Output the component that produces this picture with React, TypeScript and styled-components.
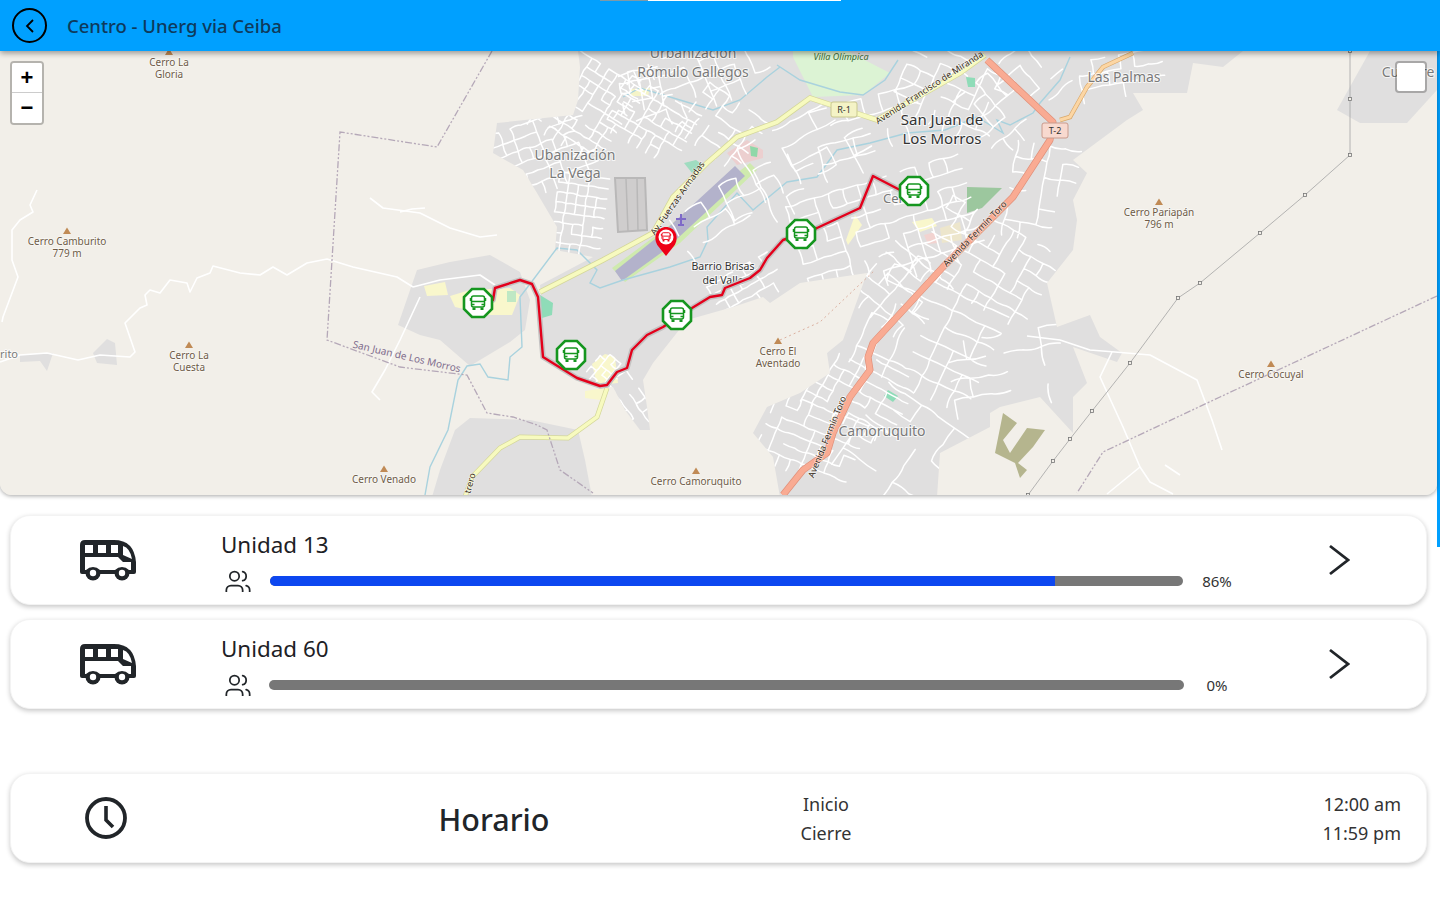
import React from 'react';
import styled, { createGlobalStyle } from 'styled-components';
import { Users } from 'lucide-react';

const GlobalStyle = createGlobalStyle`
    html, body {
        margin: 0;
        padding: 0;
        background: #ffffff;
        font-family: "Noto Sans", "Open Sans", sans-serif;
        color: #212529;
        overflow: hidden;
    }
`;

const Page = styled.div`
    position: relative;
    width: 1440px;
    height: 900px;
    overflow: hidden;
`;

const TopStrip = styled.div`
    position: absolute;
    top: 0;
    left: 600px;
    z-index: 5;
    display: flex;
    height: 1px;
`;

const StripPart = styled.span<{ $w: number; $color: string }>`
    width: ${p => p.$w}px;
    background: ${p => p.$color};
`;

const ScrollMark = styled.div`
    position: absolute;
    top: 0;
    right: 0;
    width: 3px;
    height: 547px;
    background: #00a0ff;
`;

const Header = styled.header`
    position: relative;
    z-index: 3;
    display: flex;
    align-items: center;
    gap: 20px;
    height: 51px;
    padding-left: 12px;
    background: #00a0ff;
    box-shadow: 0 2px 6px rgba(0, 0, 0, 0.4);
`;

const BackButton = styled.button`
    display: flex;
    align-items: center;
    justify-content: center;
    width: 35px;
    height: 35px;
    padding: 0;
    border: 2px solid #000000;
    border-radius: 50%;
    background: transparent;
`;

const HeaderTitle = styled.h1`
    margin: 0;
    font-size: 18.5px;
    font-weight: 500;
    color: #0e3a5c;
`;

const Content = styled.main`
    display: flex;
    flex-direction: column;
    width: 1437px;
`;

const MapBox = styled.section`
    position: relative;
    height: 444px;
    overflow: hidden;
    background: #f2efe9;
    border-radius: 0 0 12px 12px;
    box-shadow: 0 1px 4px rgba(0, 0, 0, 0.35);
`;

const MapDrawing = styled.svg`
    display: block;
    width: 1437px;
    height: 444px;
`;

const ZoomControl = styled.div`
    position: absolute;
    top: 10px;
    left: 10px;
    display: flex;
    flex-direction: column;
    width: 30px;
    border: 2px solid rgba(0, 0, 0, 0.25);
    border-radius: 4px;
    background-clip: padding-box;
`;

const ZoomButton = styled.button<{ $first?: boolean }>`
    width: 30px;
    height: 30px;
    padding: 0;
    border: none;
    border-bottom: ${p => (p.$first ? '1px solid #cccccc' : 'none')};
    border-radius: ${p => (p.$first ? '2px 2px 0 0' : '0 0 2px 2px')};
    background: #ffffff;
    font-family: "Liberation Sans", sans-serif;
    font-size: 22px;
    font-weight: 700;
    line-height: 28px;
    color: #000000;
`;

const LayerToggle = styled.div`
    position: absolute;
    top: 10px;
    right: 10px;
    width: 28px;
    height: 28px;
    border: 2px solid rgba(0, 0, 0, 0.25);
    border-radius: 4px;
    background: #ffffff;
    background-clip: padding-box;
`;

const Card = styled.article<{ $top: number }>`
    display: flex;
    align-items: stretch;
    height: 90px;
    margin: ${p => p.$top}px 10px 0;
    box-sizing: border-box;
    border: 1px solid #f3f3f3;
    border-radius: 20px;
    background: #ffffff;
    box-shadow: 0 2px 5px rgba(0, 0, 0, 0.22);
`;

const IconCell = styled.div<{ $nudge: number }>`
    display: flex;
    align-items: center;
    justify-content: center;
    flex: none;
    box-sizing: border-box;
    width: 195px;
    padding-right: ${p => p.$nudge}px;
`;

const UnitInfo = styled.div`
    display: flex;
    flex: 1;
    flex-direction: column;
    min-width: 0;
    padding: 14px 0 0 15px;
`;

const UnitName = styled.div`
    font-size: 22.4px;
    line-height: 30px;
    color: #1d2125;
`;

const LoadRow = styled.div`
    display: flex;
    align-items: center;
    height: 26px;
    margin-top: 8px;
`;

const PeopleIcon = styled.div`
    display: flex;
    flex: none;
    justify-content: center;
    width: 34px;
    height: 24px;
    margin-top: -2px;
    overflow: hidden;
    color: #212529;
`;

const Track = styled.div<{ $inset: number }>`
    flex: 1;
    height: 10px;
    margin: 0 ${p => 1 + p.$inset}px 0 ${p => 15 + p.$inset}px;
    overflow: hidden;
    border-radius: 5px;
    background: #777777;
`;

const TrackFill = styled.div`
    height: 100%;
    background: #0d47f0;
`;

const Percent = styled.span`
    flex: none;
    width: 66px;
    margin-top: -1px;
    font-size: 15px;
    color: #333333;
    text-align: center;
`;

const ArrowCell = styled.div`
    display: flex;
    flex: none;
    align-items: center;
    justify-content: center;
    box-sizing: border-box;
    width: 176px;
    padding-left: 1px;
`;

const ScheduleTitle = styled.h2`
    flex: none;
    width: 576px;
    margin: 0;
    font-size: 30.5px;
    font-weight: 500;
    line-height: 90px;
    text-align: center;
    color: #212529;
`;

const ScheduleColumn = styled.div<{ $align: string; $width: number }>`
    display: flex;
    flex: none;
    flex-direction: column;
    justify-content: center;
    gap: 4px;
    width: ${p => p.$width}px;
    padding-top: 1px;
    font-size: 18px;
    line-height: 25px;
    text-align: ${p => p.$align};
    color: #333333;
`;

const Spread = styled.div`
    flex: 1;
`;

const IconSpacer = styled.div`
    flex: none;
    width: 25px;
`;

const PeakName = styled.text`
    font-family: "Noto Sans", sans-serif;
    font-size: 10px;
    fill: #6e5b47;
    text-anchor: middle;
    paint-order: stroke;
    stroke: rgba(255, 255, 255, 0.6);
    stroke-width: 1.5px;
`;

const PlaceName = styled.text<{ $dark?: boolean; $size: number; $start?: boolean }>`
    font-family: "Noto Sans", sans-serif;
    font-size: ${p => p.$size}px;
    fill: ${p => (p.$dark ? '#333333' : '#7a7a7a')};
    text-anchor: ${p => (p.$start ? 'start' : 'middle')};
    paint-order: stroke;
    stroke: rgba(255, 255, 255, 0.7);
    stroke-width: 2px;
`;

const RoadName = styled.text`
    font-family: "Noto Sans", sans-serif;
    font-size: 9px;
    fill: #3a2e22;
    text-anchor: middle;
    paint-order: stroke;
    stroke: rgba(255, 255, 255, 0.5);
    stroke-width: 1.5px;
`;

const BorderName = styled.text`
    font-family: "Noto Sans", sans-serif;
    font-size: 10px;
    fill: #7e6b8c;
    text-anchor: middle;
`;

const ParkName = styled.text`
    font-family: "Noto Sans", sans-serif;
    font-size: 9px;
    font-style: italic;
    fill: #3b6b35;
    text-anchor: middle;
`;

const ShieldText = styled.text`
    font-family: "Noto Sans", sans-serif;
    font-size: 9px;
    fill: #333333;
    text-anchor: middle;
`;

const URBAN = [
    'M578,51 L580,67 L578,100 L573,115 L497,123 L493,153 L523,170 L537,193 L557,227 L555,250 L593,257 L540,285 L545,360 L600,387 L613,387 L625,410 L640,430 L650,430 L647,407 L643,380 L653,363 L687,320 L733,307 L763,297 L770,303 L800,283 L867,273 L843,340 L827,353 L830,373 L800,393 L767,407 L753,433 L773,457 L780,497 L937,497 L940,453 L990,427 L990,413 L1000,407 L1040,397 L1073,433 L1073,397 L1087,383 L1073,347 L1117,362 L1122,353 L1100,337 L1090,315 L1057,327 L1047,283 L1073,250 L1077,220 L1073,200 L1087,173 L1073,160 L1127,120 L1143,110 L1133,93 L1187,93 L1193,63 L1223,67 L1243,51 Z',
    'M398,325 L417,270 L450,262 L490,255 L520,272 L530,300 L525,330 L510,342 L470,366 L440,340 L420,335 Z',
    'M455,430 L470,418 L530,420 L578,430 L585,460 L592,497 L432,497 L440,470 Z',
    'M1370,51 L1337,110 L1360,123 L1407,123 L1437,90 L1437,51 Z',
    'M93,353 L107,339 L115,343 L117,365 L97,363 Z',
    'M20,355 L53,353 L47,371 L40,361 L20,362 Z',
];

const PATCHES = [
    { x: 575, y: 95, w: 90, h: 80, a: 32, c: 10, p: 0.8 },
    { x: 540, y: 150, w: 90, h: 60, a: -20, c: 12, p: 0.74 },
    { x: 578, y: 210, w: 46, h: 70, a: 8, c: 10, p: 0.9 },
    { x: 690, y: 80, w: 130, h: 60, a: -22, c: 16, p: 0.58 },
    { x: 650, y: 115, w: 70, h: 50, a: 30, c: 10, p: 0.75 },
    { x: 720, y: 120, w: 60, h: 50, a: 35, c: 12, p: 0.62 },
    { x: 800, y: 150, w: 110, h: 60, a: -28, c: 20, p: 0.62 },
    { x: 710, y: 220, w: 70, h: 40, a: -30, c: 18, p: 0.52 },
    { x: 770, y: 190, w: 90, h: 50, a: -25, c: 19, p: 0.54 },
    { x: 860, y: 130, w: 90, h: 60, a: -15, c: 18, p: 0.6 },
    { x: 880, y: 225, w: 170, h: 90, a: -17, c: 15, p: 0.85 },
    { x: 950, y: 90, w: 100, h: 70, a: 25, c: 15, p: 0.68 },
    { x: 1010, y: 100, w: 90, h: 70, a: -40, c: 15, p: 0.62 },
    { x: 1120, y: 75, w: 80, h: 40, a: -10, c: 14, p: 0.6 },
    { x: 1040, y: 190, w: 60, h: 90, a: 10, c: 16, p: 0.6 },
    { x: 985, y: 260, w: 120, h: 80, a: 30, c: 14, p: 0.74 },
    { x: 930, y: 330, w: 120, h: 90, a: 25, c: 18, p: 0.68 },
    { x: 900, y: 290, w: 70, h: 70, a: 40, c: 15, p: 0.72 },
    { x: 1000, y: 370, w: 100, h: 70, a: -10, c: 19, p: 0.54 },
    { x: 860, y: 385, w: 90, h: 60, a: 28, c: 12, p: 0.8 },
    { x: 810, y: 435, w: 90, h: 60, a: 22, c: 12, p: 0.75 },
    { x: 900, y: 445, w: 90, h: 90, a: 35, c: 20, p: 0.62 },
    { x: 620, y: 405, w: 50, h: 50, a: 55, c: 11, p: 0.6 },
    { x: 740, y: 285, w: 60, h: 30, a: -30, c: 10, p: 0.7 },
    { x: 640, y: 85, w: 40, h: 30, a: -10, c: 10, p: 0.65 },
    { x: 605, y: 370, w: 26, h: 30, a: 40, c: 7, p: 0.6 },
];

// small seeded generator so the street pattern stays the same on every load
const makeRandom = (seed: number) => () => {
    seed = (seed * 16807) % 2147483647;
    return seed / 2147483647;
};

const buildStreets = () => {
    const random = makeRandom(48271);
    let d = '';
    PATCHES.forEach(({ x, y, w, h, a, c, p }) => {
        const rad = (a * Math.PI) / 180;
        const place = (u: number, v: number) => {
            const px = x + u * Math.cos(rad) - v * Math.sin(rad);
            const py = y + u * Math.sin(rad) + v * Math.cos(rad);
            return `${px.toFixed(1)},${py.toFixed(1)}`;
        };
        const bend = () => (random() - 0.5) * c * 0.35;
        for (let v = -h / 2; v <= h / 2; v += c) {
            for (let u = -w / 2; u <= w / 2; u += c) {
                if (random() < p) d += `M${place(u, v)}Q${place(u + c / 2, v + bend())} ${place(u + c, v)}`;
                if (random() < p * 0.75) d += `M${place(u, v)}Q${place(u + bend(), v + c / 2)} ${place(u, v + c)}`;
            }
        }
    });
    return d;
};

const STREETS = buildStreets();

const TRACKS = [
    'M37,190 L30,205 L33,212 L20,220 L12,230 L12,260 L18,277 L3,317 L2,322',
    'M0,362 L20,355 L47,353 L78,360 L100,355 L130,357 L135,352 L125,323 L140,308 L147,305 L145,295 L150,290 L160,293 L170,280 L187,283 L190,292 L197,278 L210,273 L213,266 L240,273 L260,275 L273,267 L287,275 L307,263 L327,259 L353,267 L397,277 L413,287',
    'M370,198 L383,208 L420,213 L450,228 L480,237 L497,235',
    'M400,212 L412,209 L425,208',
    'M420,297 L400,340 L385,370 L372,392 L380,400',
    'M413,287 L440,280 L480,275 L495,285',
    'M1027,336 L1060,340 L1090,350 L1115,352 L1150,355 L1197,380 L1212,420 L1222,450',
    'M1112,352 L1100,377 L1123,427 L1140,467 L1107,494',
    'M1140,467 L1150,482 L1173,494',
    'M1165,465 L1180,475',
];

const RIVERS = [
    'M425,495 L430,467 L448,430 L458,380 L467,366 L480,364 L488,377 L508,380 L510,357 L522,347 L520,297 L533,280 L557,248 L577,250 L597,270 L590,283 L600,288 L623,280 L670,267 L700,257 L708,240 L707,227 L737,193 L753,210 L787,182 L817,177 L837,150 L870,143 L907,133',
    'M623,97 L640,88 L680,100 L713,110 L740,100 L767,77 L780,67',
    'M777,65 L800,80 L840,92 L863,95 L885,80 L898,60',
    'M1070,57 L1060,80 L1040,103 L1033,113 L1010,125 L997,120 L1003,133 L977,117 L945,130 L907,133',
];

const BORDERS = [
    'M492,51 L437,147 L340,132 L327,340 L400,367 L467,375 L487,413 L513,417 L537,425 L547,430 L560,470 L593,493',
    'M1437,296 L1220,397 L1103,452 L1077,493',
];

const POWER = [
    [1350, 51], [1350, 99], [1350, 155], [1305, 195], [1260, 233], [1200, 283], [1178, 298],
    [1130, 363], [1092, 411], [1070, 439], [1053, 461], [1028, 495],
];

const ROUTE =
    'M478,303 L493,300 L495,288 L520,280 L532,284 L538,297 L543,357 L577,378 L600,386 L607,385 L617,372 L627,368 L632,350 L647,335 L663,327 L692,308 L710,297 L722,295 L725,288 L750,278 L760,270 L767,258 L783,240 L817,228 L860,208 L873,176 L900,190';

const STOPS = [
    [478, 303],
    [571, 355],
    [677, 315],
    [801, 234],
    [914, 191],
];

const PEAKS: { x: number; y: number; lines: string[] }[] = [
    { x: 169, y: 52, lines: ['Cerro La', 'Gloria'] },
    { x: 67, y: 231, lines: ['Cerro Camburito', '779 m'] },
    { x: 189, y: 345, lines: ['Cerro La', 'Cuesta'] },
    { x: 384, y: 469, lines: ['Cerro Venado'] },
    { x: 696, y: 471, lines: ['Cerro Camoruquito'] },
    { x: 778, y: 341, lines: ['Cerro El', 'Aventado'] },
    { x: 1159, y: 202, lines: ['Cerro Pariapán', '796 m'] },
    { x: 1271, y: 364, lines: ['Cerro Cocuyal'] },
];

const PLACES = [
    { x: 693, y: 58, text: 'Urbanización', size: 14 },
    { x: 693, y: 77, text: 'Rómulo Gallegos', size: 14 },
    { x: 575, y: 160, text: 'Ubanización', size: 14 },
    { x: 575, y: 178, text: 'La Vega', size: 14 },
    { x: 1124, y: 82, text: 'Las Palmas', size: 14 },
    { x: 882, y: 436, text: 'Camoruquito', size: 14 },
    { x: 1408, y: 77, text: 'Cumbre', size: 14 },
    { x: 942, y: 125, text: 'San Juan de', size: 15, dark: true },
    { x: 942, y: 144, text: 'Los Morros', size: 15, dark: true },
    { x: 723, y: 270, text: 'Barrio Brisas', size: 10.5, dark: true },
    { x: 723, y: 284, text: 'del Valle', size: 10.5, dark: true },
];

const ROAD_NAMES = [
    { x: 680, y: 200, angle: -55, text: 'Av. Fuerzas Armadas' },
    { x: 931, y: 90, angle: -33, text: 'Avenida Francisco de Miranda' },
    { x: 977, y: 236, angle: -46, text: 'Avenida Fermín Toro' },
    { x: 830, y: 438, angle: -68, text: 'Avenida Fermín Toro' },
    { x: 473, y: 484, angle: -75, text: 'trero' },
];

const COLOR_GREEN = '#15961f';
const COLOR_RED = '#e3001b';

const BusFront = ({ color }: { color: string }) => (
    <g fill="none" stroke={color} strokeWidth={1.5}>
        <rect x={-6.5} y={-7} width={13} height={11} rx={2} />
        <path d="M-6.5,-1.5 H6.5 M-7.5,-5 V-2 M7.5,-5 V-2" />
        <path d="M-4,4.5 V7 M4,4.5 V7" strokeWidth={3} />
        <path d="M-6,1.5 H6" strokeWidth={1.5} strokeDasharray="2.5 7" />
    </g>
);

const BusStop = ({ x, y }: { x: number; y: number }) => (
    <g transform={`translate(${x},${y})`}>
        <polygon
            points="-6,-14 6,-14 14,-6 14,6 6,14 -6,14 -14,6 -14,-6"
            fill="#ffffff"
            stroke={COLOR_GREEN}
            strokeWidth={2.6}
        />
        <BusFront color={COLOR_GREEN} />
    </g>
);

const MapArt = () => (
    <MapDrawing viewBox="0 51 1437 444">
        <defs>
            <clipPath id="urban-clip">
                {URBAN.map(d => <path key={d} d={d} />)}
            </clipPath>
        </defs>

        <rect x={0} y={51} width={1437} height={444} fill="#f2efe9" />
        {URBAN.map(d => <path key={d} d={d} fill="#e0dfdf" />)}

        {/* land use */}
        <path d="M793,57 L813,97 L863,95 L890,73 L847,51 L793,51 Z" fill="#dcf3d4" />
        <path d="M750,163 L757,170 L680,243 L625,282 L612,268 L670,225 Z" fill="#cfeaae" />
        <path d="M735,166 L745,176 L665,250 L622,281 L615,271 L660,235 Z" fill="#b3b2cb" />
        <path d="M727,153 L747,140 L763,150 L763,158 L737,165 Z" fill="#eccfcf" />
        <path d="M750,146 L758,148 L757,157 L751,156 Z" fill="#8fd8a8" />
        <path d="M684,163 L696,160 L703,165 L692,173 Z" fill="#9fdcc0" />
        <path d="M967,187 L1002,188 L982,208 L967,213 Z" fill="#9cc79e" />
        <path d="M540,295 L553,303 L552,315 L542,318 Z" fill="#8fdcb8" />
        <path d="M424,286 L445,282 L448,295 L427,296 Z" fill="#f9f7cc" />
        <path d="M450,296 L470,290 L510,288 L520,295 L512,315 L490,315 L455,307 Z" fill="#f9f7cc" />
        <path d="M507,291 L516,291 L516,302 L507,302 Z" fill="#bfe8c4" />
        <path d="M592,364 L605,354 L615,357 L618,383 L597,385 Z" fill="#f9f7cc" />
        <path d="M585,391 L605,388 L600,400 L585,398 Z" fill="#f9f7cc" />
        <path d="M848,245 L862,225 L855,215 L846,240 Z" fill="#f9f7cc" />
        <path d="M912,222 L932,218 L937,226 L920,232 Z" fill="#f9f7cc" />
        <path d="M940,228 L960,222 L962,240 L942,243 Z" fill="#ede6cc" />
        <path d="M924,235 L935,232 L938,243 L928,244 Z" fill="#f2d3d0" />
        <path d="M1003,413 L1017,423 L1003,440 L1010,453 L1027,428 L1045,430 L1033,447 L1018,463 L1027,470 L1020,478 L1015,463 L995,453 Z" fill="#b5b58e" />
        <path d="M630,89 L650,88 L648,96 L630,96 Z" fill="#f5f4c8" />
        <path d="M888,390 L898,396 L893,402 L884,396 Z" fill="#8fdcb8" />
        <path d="M966,77 L975,78 L975,87 L968,87 Z" fill="#8fdcb8" />

        {/* rivers and tracks */}
        {RIVERS.map(d => <path key={d} d={d} fill="none" stroke="#a9d2de" strokeWidth={1.4} />)}
        {TRACKS.map(d => <path key={d} d={d} fill="none" stroke="#ffffff" strokeWidth={1.6} strokeLinejoin="round" />)}

        {/* streets */}
        <path d={STREETS} clipPath="url(#urban-clip)" fill="none" stroke="#ffffff" strokeWidth={1.5} strokeLinecap="round" />

        {/* big tank block */}
        <path d="M615,178 L645,178 L647,230 L618,232 Z" fill="#cfcdcd" stroke="#b9b8b8" strokeWidth={2} />
        <path d="M626,179 L628,231 M637,179 L638,231" stroke="#b9b8b8" strokeWidth={1.5} />
        <path d="M681,214 L681,224 M676,219 L686,219 M678,225 L684,225" stroke="#7e69c8" strokeWidth={2} fill="none" />

        {/* main roads */}
        <path d="M540,292 L603,260 L653,233 L673,197 L707,163 L737,137 L777,122 L810,98 L877,120 L960,73 L985,55" fill="none" stroke="#d4d79a" strokeWidth={5.5} />
        <path d="M540,292 L603,260 L653,233 L673,197 L707,163 L737,137 L777,122 L810,98 L877,120 L960,73 L985,55" fill="none" stroke="#f7fabf" strokeWidth={4} />
        <path d="M607,388 L597,417 L568,438 L520,437 L500,448 L472,477 L465,497" fill="none" stroke="#d4d79a" strokeWidth={5} />
        <path d="M607,388 L597,417 L568,438 L520,437 L500,448 L472,477 L465,497" fill="none" stroke="#f7fabf" strokeWidth={3.6} />
        <path d="M1060,120 L1070,117 L1087,87 L1103,67 L1133,53" fill="none" stroke="#d9a86a" strokeWidth={4.5} />
        <path d="M1060,120 L1070,117 L1087,87 L1103,67 L1133,53" fill="none" stroke="#fcd6a4" strokeWidth={3.2} />
        <path d="M987,60 L1053,122 L1050,140 L1013,197 L943,267 L873,343 L868,357 L870,370 L850,397 L833,433 L827,453 L803,470 L783,495" fill="none" stroke="#e0907a" strokeWidth={7} strokeLinejoin="round" />
        <path d="M987,60 L1053,122 L1050,140 L1013,197 L943,267 L873,343 L868,357 L870,370 L850,397 L833,433 L827,453 L803,470 L783,495" fill="none" stroke="#f9ab93" strokeWidth={5.6} strokeLinejoin="round" />

        {/* borders, power line */}
        {BORDERS.map(d => <path key={d} d={d} fill="none" stroke="#b5a8b8" strokeWidth={1.3} strokeDasharray="7 2 2 2 2 2" />)}
        <polyline points={POWER.map(p => p.join(',')).join(' ')} fill="none" stroke="#a3a3a3" strokeWidth={0.8} />
        {POWER.map(([x, y]) => <rect key={`${x}-${y}`} x={x - 1.5} y={y - 1.5} width={3} height={3} fill="#f2efe9" stroke="#777777" strokeWidth={0.8} />)}
        <path d="M780,340 L820,322 L875,270" fill="none" stroke="#d8a896" strokeWidth={0.9} strokeDasharray="2 3" />

        {/* labels */}
        {PEAKS.map(peak => (
            <g key={peak.lines[0]}>
                <path d={`M${peak.x},${peak.y - 3.5} l4,6.5 h-8 Z`} fill="#c08a55" />
                {peak.lines.map((line, i) => (
                    <PeakName key={line} x={peak.x} y={peak.y + 14 + i * 12}>{line}</PeakName>
                ))}
            </g>
        ))}
        {PLACES.map(place => (
            <PlaceName key={place.text} x={place.x} y={place.y} $size={place.size} $dark={place.dark}>{place.text}</PlaceName>
        ))}
        <PlaceName x={883} y={203} $size={13} $start>Centro</PlaceName>
        <PlaceName x={0} y={358} $size={11} $start>rito</PlaceName>
        {ROAD_NAMES.map(road => (
            <RoadName key={road.text + road.x} x={road.x} y={road.y} transform={`rotate(${road.angle} ${road.x} ${road.y})`}>{road.text}</RoadName>
        ))}
        <BorderName x={406} y={360} transform="rotate(13 406 360)">San Juan de Los Morros</BorderName>
        <ParkName x={841} y={60}>Villa Olímpica</ParkName>

        <rect x={831} y={102} width={26} height={15} rx={2} fill="#f4f3c6" stroke="#c9c88f" />
        <ShieldText x={844} y={112.5}>R-1</ShieldText>
        <rect x={1042} y={123} width={26} height={15} rx={2} fill="#f8d9cf" stroke="#c99a8c" />
        <ShieldText x={1055} y={134}>T-2</ShieldText>

        {/* route */}
        <path d={ROUTE} fill="none" stroke="#c4c2c2" strokeWidth={5.5} strokeLinejoin="round" />
        <path d={ROUTE} fill="none" stroke={COLOR_RED} strokeWidth={2.4} strokeLinejoin="round" />
        {STOPS.map(([x, y]) => <BusStop key={x} x={x} y={y} />)}

        {/* current unit pin */}
        <g transform="translate(666,238)">
            <path d="M0,18 L-8,8 C-11,4 -11,-1 -10,-4 C-8,-9 -4,-11 0,-11 C4,-11 8,-9 10,-4 C11,-1 11,4 8,8 Z" fill="#ee0016" />
            <circle cx={0} cy={-1} r={7.5} fill="#ffffff" />
            <g transform="scale(0.62) translate(0,-1.5)">
                <BusFront color="#ee0016" />
            </g>
        </g>
    </MapDrawing>
);

const BusIcon = () => (
    <svg width="56" height="41" viewBox="0 0 56 41">
        <path d="M0,5 Q0,0 5,0 H34 Q54,0 56,22 V32 Q56,34 54,34 H2 Q0,34 0,32 Z" fill="#212529" />
        <circle cx="13" cy="33" r="7.5" fill="#212529" />
        <circle cx="42" cy="33" r="7.5" fill="#212529" />
        <path d="M5,5 H13 V13 H5 Z M18,5 H26 V13 H18 Z M31,5 H38 V13 H31 Z M43,6 Q50,8 52,19 L43,15 Z" fill="#ffffff" />
        <path d="M5,17 H38 L43,22 H51 V30 H49 Q46,27 42,27 Q38,27 35,30 H20 Q17,27 13,27 Q9,27 6,30 H5 Z" fill="#ffffff" />
        <circle cx="13" cy="33" r="3.2" fill="#ffffff" />
        <circle cx="42" cy="33" r="3.2" fill="#ffffff" />
    </svg>
);

const ChevronIcon = () => (
    <svg width="22" height="32" viewBox="0 0 22 32" fill="none">
        <path d="M2,2 L20,16 L2,30" stroke="#212529" strokeWidth="2.8" />
    </svg>
);

const ClockIcon = () => (
    <svg width="42" height="42" viewBox="0 0 42 42" fill="none">
        <circle cx="21" cy="21" r="19" stroke="#212529" strokeWidth="3.8" />
        <path d="M21,9 V23 L28,30" stroke="#212529" strokeWidth="3.6" />
    </svg>
);

const UnitCard = ({ name, percent, inset, top }: { name: string; percent: number; inset: number; top: number }) => (
    <Card $top={top}>
        <IconCell $nudge={2}>
            <BusIcon />
        </IconCell>
        <UnitInfo>
            <UnitName>{name}</UnitName>
            <LoadRow>
                <PeopleIcon>
                    <Users size={28} strokeWidth={1.5} />
                </PeopleIcon>
                <Track $inset={inset}>
                    <TrackFill style={{ width: `${percent}%` }} />
                </Track>
                <Percent>{percent}%</Percent>
            </LoadRow>
        </UnitInfo>
        <ArrowCell>
            <ChevronIcon />
        </ArrowCell>
    </Card>
);

export default function App() {
    return (
        <Page>
            <GlobalStyle />
            <TopStrip>
                <StripPart $w={48} $color="#7d9aa8" />
                <StripPart $w={193} $color="#ffffff" />
            </TopStrip>
            <ScrollMark />
            <Header>
                <BackButton aria-label="Volver">
                    <svg width="12" height="16" viewBox="0 0 12 16" fill="none">
                        <path d="M9,2 L3,8 L9,14" stroke="#000000" strokeWidth="1.8" />
                    </svg>
                </BackButton>
                <HeaderTitle>Centro - Unerg via Ceiba</HeaderTitle>
            </Header>
            <Content>
                <MapBox>
                    <MapArt />
                    <ZoomControl>
                        <ZoomButton $first>+</ZoomButton>
                        <ZoomButton>−</ZoomButton>
                    </ZoomControl>
                    <LayerToggle />
                </MapBox>
                <UnitCard name="Unidad 13" percent={86} inset={0} top={20} />
                <UnitCard name="Unidad 60" percent={0} inset={-1} top={14} />
                <Card $top={64}>
                    <IconCell $nudge={6}>
                        <ClockIcon />
                    </IconCell>
                    <ScheduleTitle>Horario</ScheduleTitle>
                    <ScheduleColumn $align="center" $width={88}>
                        <span>Inicio</span>
                        <span>Cierre</span>
                    </ScheduleColumn>
                    <Spread />
                    <ScheduleColumn $align="right" $width={120}>
                        <span>12:00 am</span>
                        <span>11:59 pm</span>
                    </ScheduleColumn>
                    <IconSpacer />
                </Card>
            </Content>
        </Page>
    );
}
